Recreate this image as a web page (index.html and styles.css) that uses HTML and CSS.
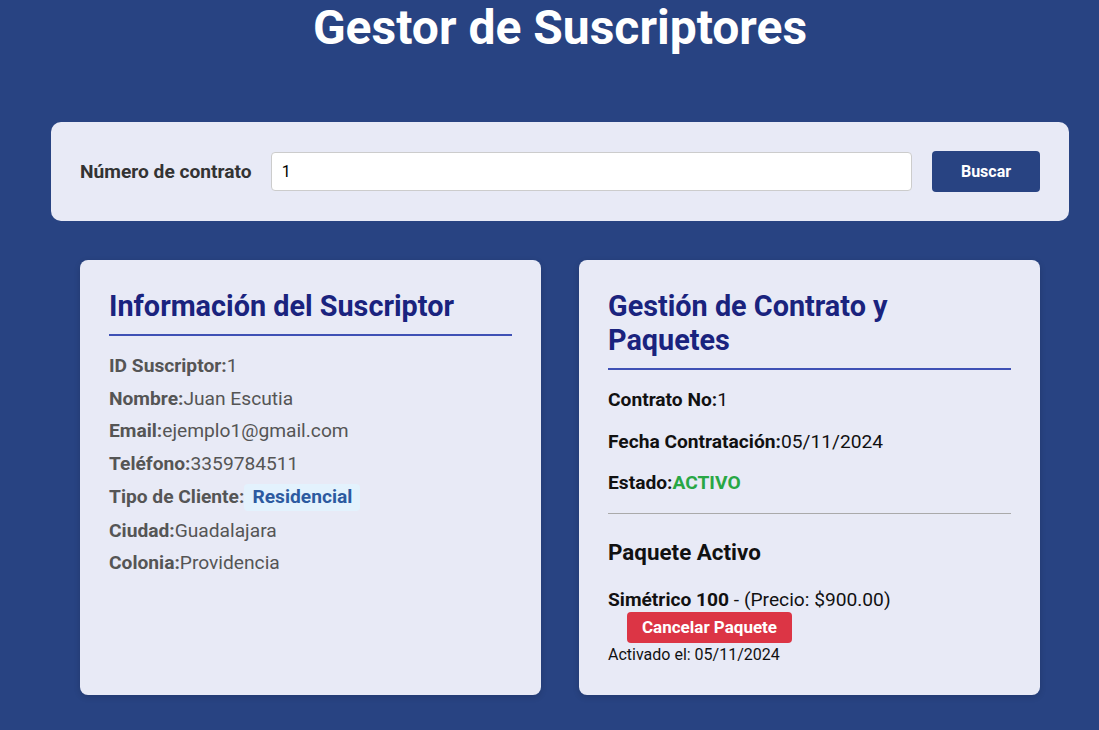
FILE: index.html
```html
<!DOCTYPE html>
<html lang="es">
<head>
<meta charset="utf-8">
<title>Gestor de Suscriptores</title>
<link rel="stylesheet" href="styles.css">
</head>
<body>
<div class="page">
  <h1 class="title">Gestor de Suscriptores</h1>

  <section class="search">
    <label class="search-label" for="contrato">Número de contrato</label>
    <input class="search-input" id="contrato" type="text" value="1">
    <button class="btn-primary" type="button">Buscar</button>
  </section>

  <div class="grid">
    <section class="card">
      <h2 class="card-title">Información del Suscriptor</h2>
      <div class="info-list">
        <p class="info-row"><strong>ID Suscriptor:</strong>1</p>
        <p class="info-row"><strong>Nombre:</strong>Juan Escutia</p>
        <p class="info-row"><strong>Email:</strong>ejemplo1@gmail.com</p>
        <p class="info-row"><strong>Teléfono:</strong>3359784511</p>
        <p class="info-row"><strong>Tipo de Cliente:</strong><span class="badge">Residencial</span></p>
        <p class="info-row"><strong>Ciudad:</strong>Guadalajara</p>
        <p class="info-row"><strong>Colonia:</strong>Providencia</p>
      </div>
    </section>

    <section class="card">
      <h2 class="card-title">Gestión de Contrato y Paquetes</h2>
      <p class="contract-row"><strong>Contrato No:</strong>1</p>
      <p class="contract-row"><strong>Fecha Contratación:</strong>05/11/2024</p>
      <p class="contract-row"><strong>Estado:</strong><span class="status-active">ACTIVO</span></p>
      <hr class="divider">
      <h3 class="package-title">Paquete Activo</h3>
      <p class="package-name"><strong>Simétrico 100</strong> - (Precio: $900.00)</p>
      <div class="package-actions">
        <button class="btn-danger" type="button">Cancelar Paquete</button>
      </div>
      <p class="package-date">Activado el: 05/11/2024</p>
    </section>
  </div>
</div>
</body>
</html>
```

FILE: styles.css
```css
* { box-sizing: border-box; }

html, body {
  margin: 0;
  padding: 0;
  background: #284382;
  font-family: Roboto, "Noto Sans", Arial, sans-serif;
}

.page {
  padding-left: 21px;
  min-height: 730px;
}

.title {
  margin: 0 0 66px;
  font-size: 48px;
  line-height: 56px;
  font-weight: 700;
  color: #ffffff;
  text-align: center;
}

.search {
  width: 1018px;
  margin: 0 auto;
  display: flex;
  align-items: center;
  gap: 19px;
  padding: 29px;
  background: #e8eaf6;
  border-radius: 10px;
}

.search-label {
  font-size: 19.2px;
  font-weight: 700;
  color: #333333;
}

.search-input {
  flex: 1;
  height: 39px;
  margin-right: 1px;
  padding: 0 10px;
  font-family: inherit;
  font-size: 16px;
  color: #000;
  background: #fff;
  border: 1px solid #cccccc;
  border-radius: 4px;
}

.btn-primary {
  width: 108px;
  height: 41px;
  font-family: inherit;
  font-size: 16px;
  font-weight: 700;
  color: #fff;
  background: #284382;
  border: none;
  border-radius: 4px;
}

.grid {
  width: 960px;
  margin: 39px auto 0;
  display: grid;
  grid-template-columns: 1fr 1fr;
  gap: 38px;
}

.card {
  background: #e8eaf6;
  border-radius: 8px;
  padding: 29px 29px 28px;
  box-shadow: 0 2px 6px rgba(0, 0, 0, 0.15);
}

.card-title {
  margin: 0 0 18px;
  padding-bottom: 11px;
  font-size: 28.8px;
  line-height: 34px;
  font-weight: 700;
  color: #1a237e;
  border-bottom: 2px solid #3f51b5;
}

.info-list {
  display: flex;
  flex-direction: column;
  gap: 8px;
}

.info-row {
  margin: 0;
  font-size: 19.2px;
  line-height: 24.5px;
  color: #555555;
}

.badge {
  display: inline-block;
  margin-left: 0;
  padding: 1px 8px;
  font-weight: 700;
  color: #2c5aa0;
  background: #e3f2fd;
  border-radius: 4px;
}

.contract-row {
  margin: 0 0 17px;
  font-size: 19.2px;
  line-height: 24.5px;
  color: #111111;
}

.status-active {
  font-weight: 700;
  color: #28a745;
}

.divider {
  margin: 0 0 24px;
  border: none;
  border-top: 1px solid #aaaaaa;
}

.package-title {
  margin: 0 0 22px;
  font-size: 22.4px;
  line-height: 28px;
  font-weight: 700;
  color: #111111;
}

.package-name {
  margin: 0;
  font-size: 19.2px;
  line-height: 24px;
  color: #111111;
}

.package-actions {
  padding-left: 19px;
}

.btn-danger {
  height: 31px;
  padding: 0 15px;
  font-family: inherit;
  font-size: 17px;
  font-weight: 700;
  color: #fff;
  background: #dc3545;
  border: none;
  border-radius: 4px;
}

.package-date {
  margin: 0;
  font-size: 16px;
  line-height: 24px;
  color: #111111;
}
```
